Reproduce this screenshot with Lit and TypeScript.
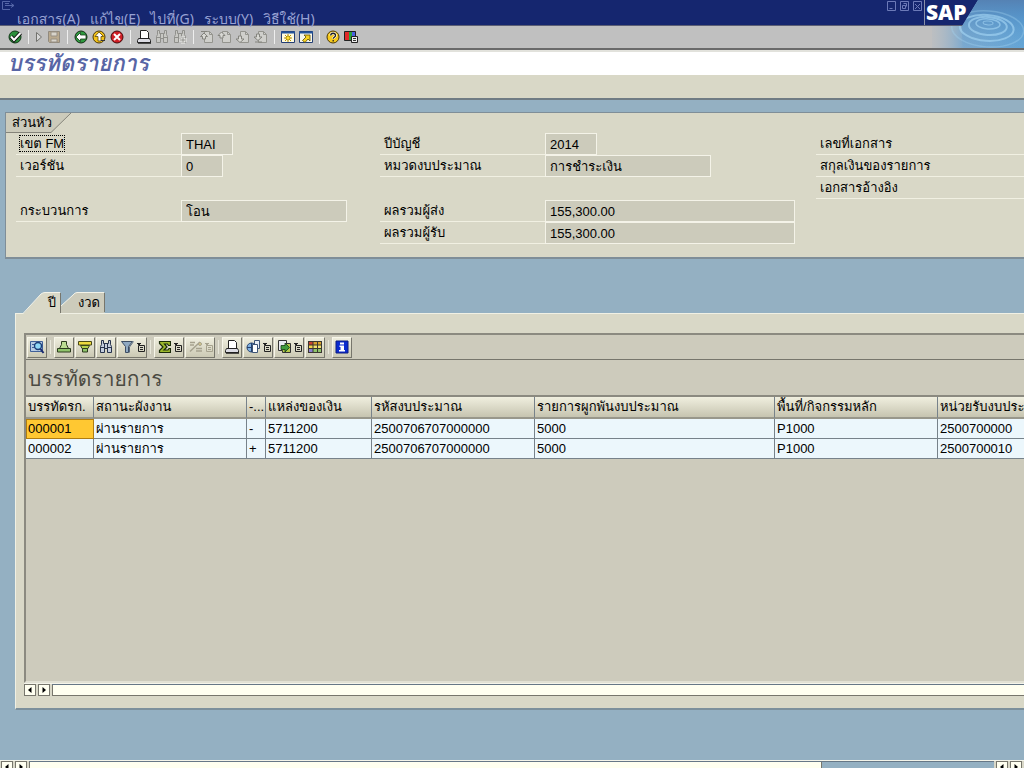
import { LitElement, html, css, svg, nothing } from "lit";
import { customElement, property } from "lit/decorators.js";
import type { SVGTemplateResult } from "lit";

const binoculars = (c: string, fill: string) => svg`
  <path d="M3.500 1.500h2v3h5v-3h2v4l1 2v6h-4v-4h-3v4h-4v-6l1-2z" fill=${fill} stroke=${c}/>
  <path d="M3 8.500h3M10 8.500h3M6.500 5v5M9.500 5v5" stroke=${c} fill="none"/>`;

const page = (arrow: string) => svg`
  <path d="M5.500 2.500h5l3 3v8h-8z" fill="#cfcfcb" stroke="#94948e"/>
  <path d="M10.500 2.500v3h3" fill="none" stroke="#94948e"/>
  <path d=${arrow} fill="#d8d8d4" stroke="#84847e"/>`;

const printer = svg`
  <path d="M4.500 9.500v-8h6l2 2v6" fill="#fff" stroke="#222"/>
  <path d="M2.500 9.500h11l1 2v2h-13v-2z" fill="#dcdce4" stroke="#222"/>
  <path d="M2 14h13" stroke="#222" stroke-width="1.500"/>`;

const ICONS: Record<string, SVGTemplateResult> = {
  ok: svg`<circle cx="8" cy="8" r="6" fill="#2c8f3c" stroke="#123a18"/>
    <path d="M4 7.500l3 3.500 6.500-7" fill="none" stroke="#111" stroke-width="4"/>
    <path d="M4 7.500l3 3.500 6.500-7" fill="none" stroke="#fff" stroke-width="2"/>`,
  play: svg`<path d="M5.500 3.500l5 4.500-5 4.500z" fill="#d6d6d6" stroke="#72726e"/>`,
  save: svg`<path d="M2.500 2.500h11v11h-10l-1-1z" fill="#b9a98e" stroke="#918a7e"/>
    <path d="M5 3h6v4H5zM5 10h6v3H5z" fill="#d8d4cb" stroke="#989084"/>`,
  back: svg`<circle cx="8" cy="8" r="6" fill="#2f9a3f" stroke="#132d15"/>
    <path d="M3 8l4.500-4.500v2.500H13v4H7.500v2.500z" fill="#fff" stroke="#173a1b" stroke-width=".8"/>`,
  exit: svg`<circle cx="8" cy="8" r="6" fill="#f4c318" stroke="#4b3909"/>
    <path d="M8 3l4.500 4.500H10V12H7V7.500H4z" fill="#fff" stroke="#5c4607" stroke-width=".8"/>
    <path d="M10 11.500h4" stroke="#333"/>`,
  cancel: svg`<circle cx="8" cy="8" r="6" fill="#d01f25" stroke="#470b0d"/>
    <path d="M5 5l6 6M11 5l-6 6" stroke="#fff" stroke-width="2"/>`,
  print: printer,
  find: binoculars("#90908c", "#c8c8c4"),
  findNext: svg`${binoculars("#90908c", "#c8c8c4")}
    <path d="M11 7v8M7 11h8" stroke="#f0f0ee" stroke-width="3"/><path d="M11 7.500v7M7.500 11h7" stroke="#8c8c88"/>`,
  first: page("M2 2.500h6M5 4l3.500 3.500H6.500V10h-3V7.500h-2z"),
  prev: page("M4.500 3l3.500 3.500H6V9H3V6.500H1z"),
  next: page("M3.500 7h3v3H9l-4 3.500L1 10h2.500z"),
  last: page("M3.500 5h3v3H9l-4 3.500L1 8h2.500zM2 13h7"),
  session: svg`<path d="M1.500 2.500h13v11h-13z" fill="#fffbe0" stroke="#223d74"/>
    <path d="M1 3.500h14" stroke="#23539b" stroke-width="2"/>
    <path d="M8 5v8M4 9h8M5 6l6 6M11 6l-6 6" stroke="#b89200"/><circle cx="8" cy="9" r="2" fill="#ffe030" stroke="#8b6e00" stroke-width=".6"/>`,
  shortcut: svg`<path d="M1.500 2.500h13v11h-13z" fill="#f7f7ea" stroke="#223d74"/>
    <path d="M1 3.500h14" stroke="#23539b" stroke-width="2"/>
    <path d="M6 6h6v6l-2-2-3 3.500-2.500-2L8 8z" fill="#f8d322" stroke="#5b4a00" stroke-width=".8"/>`,
  help: svg`<circle cx="8" cy="8" r="6" fill="#f7ca1b" stroke="#4b3909"/>
    <path d="M5.700 6.500c0-3 4.800-3 4.800 0 0 1.700-2.300 1.700-2.300 3.300" fill="none" stroke="#fff" stroke-width="2.600"/>
    <path d="M5.700 6.500c0-3 4.800-3 4.800 0 0 1.700-2.300 1.700-2.300 3.300M8.200 11v1.500" fill="none" stroke="#222" stroke-width="1.300"/>`,
  layout: svg`<path d="M1.500 2.500h11v9h-11z" fill="#333" stroke="#222"/>
    <path d="M2 3h4v8H2z" fill="#e12a2a"/><path d="M6 3h3v8H6z" fill="#28a43b"/><path d="M9 3h3v8H9z" fill="#4a5fe0"/>
    <path d="M8.500 7.500h6v6h-6z" fill="#eee" stroke="#222"/><path d="M10 9.500h3M10 11.500h3" stroke="#333"/>`,
  detail: svg`<path d="M1.500 2.500h12v10h-12z" fill="#b8cde4" stroke="#3f5f98"/>
    <path d="M3 5.500h3M3 8.500h3" stroke="#3f5f98"/>
    <circle cx="9" cy="7" r="3.500" fill="#8fd8f6" stroke="#1d3d77" stroke-width="1.400"/><path d="M11.500 10l3 4" stroke="#1b2b70" stroke-width="2"/>`,
  sortAsc: svg`<path d="M5.500 2.500h5v3l2 4h-9l2-4z" fill="#bcdd92" stroke="#2c3c1e"/>
    <path d="M1.500 9.500h13v3.500h-13z" fill="#8fc46b" stroke="#2c3c1e"/>`,
  sortDesc: svg`<path d="M1.500 2.500h13v3.500h-13z" fill="#ecd93e" stroke="#4b4a16"/><path d="M3.500 6.500h9L11 9.500H5z" fill="#b4d04a" stroke="#39451c"/>
    <path d="M5.500 9.500h5v3.500h-5z" fill="#8fc46b" stroke="#2c3c1e"/>`,
  search: binoculars("#27334d", "#c4cede"),
  filter: svg`<path d="M1.500 2.500h11l-4 5v6H5.500v-6z" fill="#8fa9c2" stroke="#3c4d63"/>
    <path d="M9.500 8l4-5.500M9.500 13.500V8" stroke="#5a6c80" fill="none"/>`,
  sum: svg`<path d="M2.500 2.500h11v4h-2l-1-1.500H7.500L10 8l-3 3h4l1-1.500h1.500v4h-11v-2L6 8 2.500 4.500z" fill="#9db92d" stroke="#1b2c0a" stroke-width="1.200"/>`,
  subtotal: svg`<path d="M2 3.500h5M2 6h4M2 12.500L12 3M8 9.500h6M8 12h6" stroke="#a6a28e" stroke-width="1.500"/>
    <circle cx="12" cy="5" r="1.500" fill="#d9c98a" stroke="#a6a28e"/>`,
  printView: printer,
  views: svg`<path d="M8.500 1.500h5v8h-5z" fill="#e8eef5" stroke="#3d5476"/>
    <circle cx="5.500" cy="8.500" r="4.500" fill="#7fb0e0" stroke="#24406e"/><path d="M5.500 4v9M1 8.500h8" stroke="#24406e"/>
    <path d="M6.500 5.500h5v8h-5z" fill="#fff" stroke="#3d5476"/>`,
  exportFile: svg`<path d="M1.500 1.500h8v10h-8z" fill="#e9eaf2" stroke="#333"/><path d="M8.500 4.500h5v9H5.500v-2" fill="#b5c94a" stroke="#333"/>
    <path d="M4 6.500h4V4l4.500 4.500L8 13v-2.500H4z" fill="#3f9a3c" stroke="#143a14" stroke-width=".8"/>`,
  columns: svg`<path d="M1 2h14v12H1z" fill="#3a3730"/>
    <path d="M2 3h3.500v2.500H2z" fill="#c9412e"/><path d="M6.500 3h3.500v2.500H6.500z" fill="#d8a12c"/><path d="M11 3h3v2.500h-3z" fill="#d8a12c"/>
    <path d="M2 6.500h3.500V9H2z" fill="#f1d64b"/><path d="M6.500 6.500h3.500V9H6.500zM11 6.500h3V9h-3z" fill="#f4e36e"/>
    <path d="M2 10h3.500v3H2z" fill="#8b7fd0"/><path d="M6.500 10h3.500v3H6.500zM11 10h3v3h-3z" fill="#8fc46b"/>`,
  info: svg`<path d="M2 2h12v12H2z" fill="#0a2bd0" stroke="#0a1a80"/>
    <path d="M6 3.500h4v2H6zM5.500 6.500h4.500v4.500h1v1.500h-6v-1.500h1.500V8h-1z" fill="#fff"/>`,
};

@customElement("sap-icon")
class SapIcon extends LitElement {
  @property() name = "";
  static styles = css`
    :host { display: block; width: 16px; height: 16px; flex: none; }
    svg { display: block; }
  `;
  render() {
    return html`<svg width="16" height="16" viewBox="0 0 16 16" aria-hidden="true">${ICONS[this.name]}</svg>`;
  }
}

@customElement("scroll-strip")
class ScrollStrip extends LitElement {
  @property({ type: Boolean }) ends = false;
  static styles = css`
    :host { display: flex; gap: 2px; height: 14px; background: #d9d8c8; border-top: 1px solid #f4f4ea; box-sizing: border-box; }
    button { flex: none; width: 12px; height: 12px; padding: 0; border: 1px solid #77766c; background: #fffff0; display: grid; place-items: center; }
    svg { display: block; }
    .track { flex: 1; display: flex; background: #94b0c2; border-top: 1px solid #667786; height: 12px; box-sizing: border-box; }
    .thumb { flex: 1; background: #fffff0; border-left: 1px solid #77766c; border-bottom: 1px solid #77766c; }
    .ends .thumb { flex: 0 0 82%; border-right: 1px solid #77766c; }
    .right { display: flex; gap: 2px; }
  `;
  arrow(left: boolean) {
    return html`<button aria-label=${left ? "เลื่อนซ้าย" : "เลื่อนขวา"}>
      <svg width="6" height="6" viewBox="0 0 6 6"><path d=${left ? "M4.500 0v6L1 3z" : "M1.500 0v6L5 3z"} fill="#000"/></svg>
    </button>`;
  }
  render() {
    return html`${this.arrow(true)}${this.arrow(false)}
      <div class="track ${this.ends ? "ends" : ""}"><div class="thumb"></div></div>
      ${this.ends ? html`<div class="right">${this.arrow(true)}${this.arrow(false)}</div>` : nothing}`;
  }
}

interface Field { label: string; value?: string; size?: string; focus?: boolean; }

const FIELDS: (Field | null)[][] = [
  [
    { label: "เขต FM", value: "THAI", size: "s", focus: true },
    { label: "เวอร์ชัน", value: "0", size: "xs" },
    null,
    { label: "กระบวนการ", value: "โอน", size: "m" },
  ],
  [
    { label: "ปีบัญชี", value: "2014", size: "s" },
    { label: "หมวดงบประมาณ", value: "การชำระเงิน", size: "m" },
    null,
    { label: "ผลรวมผู้ส่ง", value: "155,300.00", size: "l" },
    { label: "ผลรวมผู้รับ", value: "155,300.00", size: "l" },
  ],
  [{ label: "เลขที่เอกสาร" }, { label: "สกุลเงินของรายการ" }, { label: "เอกสารอ้างอิง" }],
];

const MENUS = ["เอกสาร(A)", "แก้ไข(E)", "ไปที่(G)", "ระบบ(Y)", "วิธีใช้(H)"];

const MAIN_TOOLS = [
  ["ok"], ["play", "save"], ["back", "exit", "cancel"], ["print", "find", "findNext"],
  ["first", "prev", "next", "last"], ["session", "shortcut"], ["help", "layout"],
];

const GRID_TOOLS = [
  ["detail"], ["sortAsc", "sortDesc", "search", "filter+"], ["sum+", "subtotal+"],
  ["printView", "views+", "exportFile+", "columns"], ["info"],
];

const COLUMNS = [
  { title: "บรรทัดรก.", width: 68 },
  { title: "สถานะผังงาน", width: 153 },
  { title: "-...", width: 19 },
  { title: "แหล่งของเงิน", width: 106 },
  { title: "รหัสงบประมาณ", width: 163 },
  { title: "รายการผูกพันงบประมาณ", width: 240 },
  { title: "พื้นที่/กิจกรรมหลัก", width: 163 },
  { title: "หน่วยรับงบประมาณ", width: 163 },
];

const ROWS = [
  ["000001", "ผ่านรายการ", "-", "5711200", "2500706707000000", "5000", "P1000", "2500700000"],
  ["000002", "ผ่านรายการ", "+", "5711200", "2500706707000000", "5000", "P1000", "2500700010"],
];

@customElement("app-root")
class AppRoot extends LitElement {
  static styles = css`
    :host { display: flex; flex-direction: column; height: 100vh; overflow: hidden; background: #94b0c2; color: #000;
      font: 13px/16px "Liberation Sans", "Loma", "Noto Sans Thai Looped", "Garuda", "Waree", "Noto Sans Thai", sans-serif; }
    * { box-sizing: border-box; }
    button, input { font: inherit; color: inherit; margin: 0; padding: 0; border: 0; background: none; border-radius: 0; }
    header { position: relative; flex: none; background: #c0c0c0; border-bottom: 2px solid #6a6a6a; }
    .menubar { display: flex; align-items: flex-end; justify-content: space-between; height: 26px; background: #15266f; border-bottom: 1px solid #5c5f75; color: #98a2d4; }
    .sysmenu { position: absolute; left: 2px; top: 1px; }
    .menus { display: flex; gap: 10px; padding-left: 17px; font-family: "Noto Sans", "Loma", "Noto Sans Thai Looped", "Noto Sans Thai", sans-serif; font-size: 14px; line-height: 12px; }
    .menus button { height: 12px; white-space: nowrap; }
    .winctl { align-self: flex-start; display: flex; gap: 4px; padding-top: 1px; margin-right: 102px; }
    .winctl button, .winctl svg { display: block; width: 9px; height: 10px; }
    .tools { display: flex; align-items: center; height: 22px; padding-left: 7px; }
    .group { display: flex; gap: 2px; }
    .group button { width: 16px; height: 16px; overflow: hidden; }
    .group .narrow { width: 10px; display: flex; justify-content: center; }
    .sep { flex: none; width: 1px; height: 14px; margin: 0 5px; background: #eee; }
    .brand { position: absolute; right: 0; top: 0; width: 100px; height: 48px; }
    .brand svg { display: block; }
    .logo { position: absolute; left: 2px; top: -3px; font: 800 21px/30px "Open Sans", sans-serif; color: #fff; }
    h1 { flex: none; margin: 0; height: 25px; padding: 0 8px; background: #fff; border-top: 2px solid #e2e2dc; color: #5865a5;
      font-size: 22px; line-height: 24px; font-weight: bold; font-style: italic; }
    .appbar { flex: none; height: 25px; background: #d9d8c7; border-bottom: 2px solid #707c84; }
    .head { flex: none; margin: 12px 0 0 5px; height: 147px; background: #d9d8c7; border: 1px solid #7f8e98; border-right: 0; border-bottom-width: 2px; overflow: hidden; }
    .caption { position: relative; height: 20px; width: 66px; margin: 0; padding: 1px 0 0 6px; font-size: 13px; line-height: 18px; font-weight: normal; }
    .caption svg { position: absolute; left: 0; top: 0; }
    .caption span { position: relative; }
    .cols { display: grid; grid-template-columns: 364px 436px minmax(209px, 1fr); padding-left: 10px; }
    .col { display: grid; grid-template-rows: 22px 22px 23px 22px 22px; align-content: start; }
    .row { display: flex; }
    .row label { flex: 0 0 165px; padding: 2px 4px 0; height: 22px; line-height: 18px; border-bottom: 1px solid #f1f0e2; white-space: nowrap; }
    .row.wide label { flex: 1; }
    .focus { outline: 1px dotted #000; }
    .row input { height: 22px; padding: 0 4px; background: #cccbbb; border: 1px solid #f4f3e8; }
    .xs { width: 42px; } .s { width: 52px; } .m { width: 166px; } .l { width: 250px; }
    .tabs { flex: none; display: flex; margin: 33px 0 0 23px; height: 21px; }
    .tabs button { position: relative; height: 21px; text-align: right; }
    .tabs svg { position: absolute; left: 0; top: 0; }
    .tabs span { position: relative; }
    .tab1 { width: 38px; padding-right: 5px; }
    .tab2 { width: 44px; padding-right: 5px; }
    .panel { flex: 1; min-height: 0; display: flex; flex-direction: column; margin: 0 0 50px 15px; padding: 19px 0 11px 8px; background: #d9d8c7;
      border: 1px solid #f0f0e4; border-width: 1px 0 0 1px; border-bottom: 2px solid #7c909c; }
    .grid { flex: 1; min-height: 0; background: #cdcbbc; border: 2px solid #8b8a80; border-right: 0; border-bottom: 2px solid #e2e1d4; overflow: hidden; display: flex; flex-direction: column; }
    .gtools { flex: none; display: flex; align-items: center; height: 25px; padding-left: 1px; border-bottom: 1px solid #77766c; }
    .ggroup { display: flex; gap: 1px; }
    .ggroup button { display: flex; align-items: center; justify-content: center; gap: 2px; width: 20px; height: 21px; background: linear-gradient(#eeeddd, #cbc9b4); border: 1px solid; border-color: #f7f6ea #77766c #77766c #f7f6ea; }
    .ggroup .drop { width: 30px; gap: 3px; }
    .drop sap-icon { width: 14px; overflow: hidden; }
    .gsep { flex: none; width: 1px; height: 14px; margin: 0 3px; background: #e8e7da; }
    h2 { flex: none; margin: 0; height: 35px; padding: 5px 2px 0; color: #4b4a42; font-size: 21px; line-height: 28px; font-weight: normal; }
    table { flex: none; table-layout: fixed; border-collapse: separate; border-spacing: 0; width: 1075px; border-top: 2px solid #8b8a80; }
    th, td { height: 20px; padding: 0 2px; text-align: left; font-weight: normal; white-space: nowrap; overflow: hidden; border-right: 1px solid #77828a; border-bottom: 1px solid #77828a; line-height: 18px; }
    th { height: 22px; background: linear-gradient(#f0efdf, #c6c4b0); border-bottom-width: 2px; border-bottom-color: #98978b; }
    td { background: #ecf7fc; }
    td.sel { background: #ffc832; outline: 1px solid #b07d10; outline-offset: -1px; }
    .strip { flex: none; }
    .bottom { flex: none; height: 8px; overflow: hidden; }
    .bottom scroll-strip { padding: 0 2px 0 1px; }
  `;

  field(f: Field | null, id: string) {
    if (!f) return html`<div></div>`;
    return html`<div class="row ${f.value ? "" : "wide"}">
      ${f.value
        ? html`<label for=${id}><span class=${f.focus ? "focus" : ""}>${f.label}</span></label>
            <input id=${id} class=${f.size} .value=${f.value} readonly>`
        : html`<label>${f.label}</label>`}
    </div>`;
  }

  render() {
    return html`
      <header>
        <div class="menubar">
          <svg class="sysmenu" width="13" height="10" viewBox="0 0 13 10" fill="none" stroke="#5566a8"><path d="M8 .5H.500v8H8M3 4.500h9M9 2.500l3 2-3 2M3 2.500h4"/></svg>
          <nav class="menus">${MENUS.map((m) => html`<button>${m}</button>`)}</nav>
          <div class="winctl">
            ${["M2.500 7.500h3", "M3.500 2.500h3v3M2.500 4.500h3v3h-3z", "M2 3l5 5M7 3L2 8"].map((d) => html`<button aria-label="หน้าต่าง">
              <svg viewBox="0 0 9 10" fill="none" stroke="#6c7ab8"><path d="M.5.5h8v9h-8z"/><path d=${d}/></svg></button>`)}
          </div>
        </div>
        <div class="tools">
          ${MAIN_TOOLS.map((g, i) => html`${i ? html`<span class="sep"></span>` : nothing}
            <div class="group">${g.map((n) => html`<button class=${n === "play" ? "narrow" : ""} aria-label=${n}><sap-icon name=${n}></sap-icon></button>`)}</div>`)}
        </div>
        <div class="brand">
          <svg width="100" height="48" viewBox="0 0 100 48">
            <defs>
              <linearGradient id="w" x1="0" y1="0" x2="1" y2="0"><stop offset="0" stop-color="#b4bcc4" stop-opacity="0"/><stop offset=".4" stop-color="#7ba9cf"/><stop offset="1" stop-color="#64a5d6"/></linearGradient>
              <linearGradient id="t" x1="0" y1="0" x2="0" y2="1"><stop offset="0" stop-color="#5582b4"/><stop offset=".4" stop-color="#4a87c0" stop-opacity=".5"/><stop offset="1" stop-color="#5f9fd0" stop-opacity="0"/></linearGradient>
              <clipPath id="c"><path d="M54 0h46v48H8V26h30z"/></clipPath>
            </defs>
            <path d="M.500 0v25" stroke="#8990a8"/>
            <g clip-path="url(#c)">
              <path d="M0 0h100v48H0z" fill="url(#w)"/><path d="M54 0h46v48H38V26z" fill="url(#t)"/>
              <g fill="none" stroke="#a3d4f2" stroke-opacity=".65" transform="rotate(4 65 24)">
                <ellipse cx="64" cy="23" rx="5" ry="2"/><ellipse cx="64" cy="24" rx="12" ry="5" stroke-width="1.500"/>
                <ellipse cx="64" cy="26" rx="19" ry="9" stroke-width="2"/><ellipse cx="63" cy="28" rx="27" ry="13" stroke-width="2"/>
                <ellipse cx="64" cy="29" rx="36" ry="18" stroke-width="1.500" stroke-opacity=".35"/>
              </g>
            </g>
          </svg>
          <span class="logo">SAP</span>
        </div>
      </header>
      <h1>บรรทัดรายการ</h1>
      <div class="appbar"></div>

      <section class="head">
        <h3 class="caption">
          <svg width="66" height="21" viewBox="0 0 66 21"><path d="M0 0h65L45 19.500H0z" fill="#cccbbb"/><path d="M65 0L45 19.500H0" fill="none" stroke="#85847a"/></svg>
          <span>ส่วนหัว</span>
        </h3>
        <div class="cols">
          ${FIELDS.map((c, i) => html`<div class="col">${c.map((f, j) => this.field(f, `f${i}${j}`))}</div>`)}
        </div>
      </section>

      <div class="tabs" role="tablist">
        <button class="tab1" role="tab" aria-selected="true">
          <svg width="38" height="22" viewBox="0 0 38 22"><path d="M0 22L18 2q2-1.500 4-1.500h15.500V22z" fill="#d9d8c7"/><path d="M0 21.500L18 2q2-1.500 4-1.500h15" fill="none" stroke="#f4f3e8"/><path d="M37.500 1v20" stroke="#77766c"/></svg>
          <span>ปี</span>
        </button>
        <button class="tab2" role="tab" aria-selected="false">
          <svg width="44" height="21" viewBox="0 0 44 21"><path d="M0 14L12 3q2-2.500 4-2.500h27.500V21H0z" fill="#cccbbb"/><path d="M0 14L12 3q2-2.500 4-2.500h27" fill="none" stroke="#f4f3e8"/><path d="M43.500 1v19" stroke="#77766c"/></svg>
          <span>งวด</span>
        </button>
      </div>
      <section class="panel">
        <div class="grid">
          <div class="gtools">
            ${GRID_TOOLS.map((g, i) => html`${i ? html`<span class="gsep"></span>` : nothing}
              <div class="ggroup">${g.map((n) => {
                const drop = n.endsWith("+");
                const name = n.replace("+", "");
                const tone = name === "subtotal" ? "#a6a28e" : "#222";
                return html`<button class=${drop ? "drop" : ""} aria-label=${name}><sap-icon name=${name}></sap-icon>
                  ${drop ? html`<svg width="8" height="9" viewBox="0 0 8 9" fill="none" stroke=${tone}><path d="M0 .5h4M1 1.500h2M1.500 2.500h6v6h-6zM3 4.500h3M3 6.500h3"/></svg>` : nothing}</button>`;
              })}</div>`)}
          </div>
          <h2>บรรทัดรายการ</h2>
          <table>
            <colgroup>${COLUMNS.map((c) => html`<col style="width:${c.width}px">`)}</colgroup>
            <thead><tr>${COLUMNS.map((c) => html`<th>${c.title}</th>`)}</tr></thead>
            <tbody>${ROWS.map((r, i) => html`<tr>${r.map((v, j) => html`<td class=${i === 0 && j === 0 ? "sel" : ""}>${v}</td>`)}</tr>`)}</tbody>
          </table>
        </div>
        <scroll-strip class="strip"></scroll-strip>
      </section>
      <div class="bottom"><scroll-strip ends></scroll-strip></div>
    `;
  }
}
